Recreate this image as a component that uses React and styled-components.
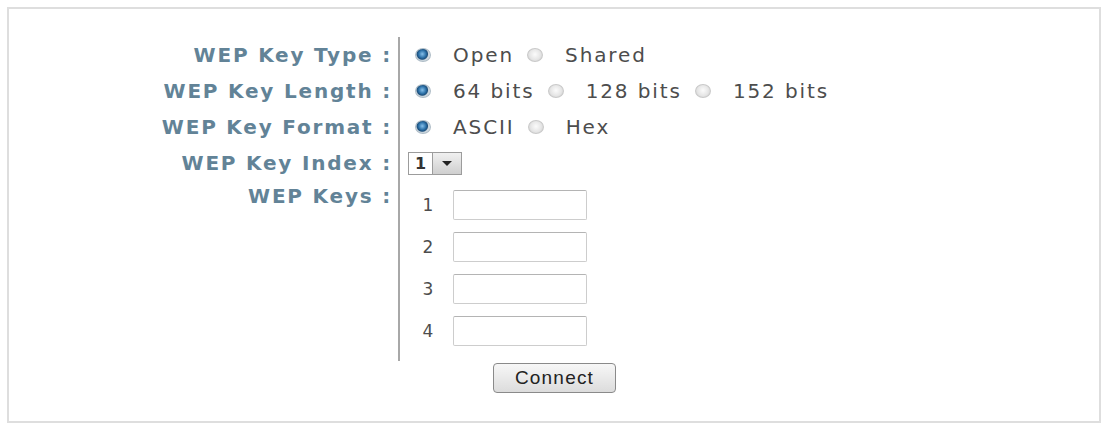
import React from "react";
import styled, { createGlobalStyle } from "styled-components";

const GlobalStyle = createGlobalStyle`
  body {
    margin: 0;
    background: #ffffff;
    font-family: "DejaVu Sans", Verdana, sans-serif;
  }
`;

const Page = styled.div`
  padding: 7px 2px 1px 7px;
`;

const Panel = styled.div`
  border: 2px solid #dedede;
  padding: 28px 0 28px;
  background: #fff;
`;

const Form = styled.div`
  display: grid;
  grid-template-columns: 389px 1fr;
`;

const Label = styled.div`
  height: 36px;
  display: flex;
  align-items: center;
  justify-content: flex-end;
  padding-right: 6px;
  font-size: 20px;
  font-weight: bold;
  letter-spacing: 1.8px;
  color: #628397;
  white-space: nowrap;
`;

const Value = styled.div`
  min-height: 36px;
  border-left: 2px solid #a8a8a8;
  display: flex;
  align-items: center;
  padding-left: ${(p) => (p.$inset ? "15px" : "8px")};
  font-size: 20px;
  letter-spacing: 1.9px;
  color: #4d4d4d;
`;

const Options = styled.div`
  display: flex;
  align-items: center;
  gap: 13px;
`;

const Option = styled.label`
  display: flex;
  align-items: center;
  white-space: nowrap;
`;

const Radio = styled.span`
  width: 16px;
  height: 14px;
  border-radius: 50%;
  margin-right: 22px;
  box-sizing: border-box;
  border: 1px solid ${(p) => (p.$checked ? "#aebcc6" : "#c9c9c9")};
  background: ${(p) =>
    p.$checked
      ? "radial-gradient(circle at 45% 42%, #86c0ea 0, #2f74ab 34%, #1c4f7c 50%, #c8d3db 60%, #eef1f3 100%)"
      : "radial-gradient(circle at 50% 45%, #fbfbfb 0, #e6e6e6 55%, #c9c9c9 100%)"};
`;

const Select = styled.div`
  display: flex;
  height: 23px;
  border: 1px solid #9c9c9c;
  box-sizing: border-box;
  background: #fff;
`;

const SelectValue = styled.span`
  width: 23px;
  display: flex;
  align-items: center;
  justify-content: center;
  font-size: 16px;
  font-weight: bold;
  letter-spacing: 0;
  color: #333;
`;

const SelectArrow = styled.span`
  width: 28px;
  border-left: 1px solid #9c9c9c;
  background: linear-gradient(#f0f0f0, #cfcfcf);
  display: flex;
  align-items: center;
  justify-content: center;

  &::after {
    content: "";
    border-left: 5px solid transparent;
    border-right: 5px solid transparent;
    border-top: 5px solid #222;
  }
`;

const KeyLabel = styled(Label)`
  align-self: start;
  margin-top: -3px;
`;

const KeyList = styled(Value)`
  flex-direction: column;
  align-items: flex-start;
  gap: 12px;
  padding-top: 9px;
  padding-bottom: 15px;
`;

const KeyRow = styled.div`
  display: flex;
  align-items: center;
`;

const KeyNum = styled.span`
  width: 40px;
  text-align: center;
  font-size: 17px;
  letter-spacing: 0;
  margin-right: 5px;
  color: #4d4d4d;
`;

const KeyInput = styled.input`
  width: 134px;
  height: 30px;
  box-sizing: border-box;
  border: 1px solid #cdcdcd;
  border-top-color: #b4b4b4;
  border-radius: 2px;
  background: #fff;
  outline: none;
`;

const Actions = styled.div`
  grid-column: 1 / -1;
  display: flex;
  justify-content: center;
  padding-top: 2px;
`;

const Button = styled.button`
  width: 123px;
  height: 30px;
  border: 1px solid #8a8a8a;
  border-radius: 4px;
  background: linear-gradient(#f7f7f7, #dcdcdc);
  font-family: "Liberation Sans", Arial, sans-serif;
  font-size: 19px;
  letter-spacing: 1.2px;
  color: #222;
  padding: 0 0 0 1px;
`;

const RadioGroup = ({ options, selected }) => (
  <Options>
    {options.map((opt) => (
      <Option key={opt}>
        <Radio $checked={opt === selected} />
        {opt}
      </Option>
    ))}
  </Options>
);

const App = () => {
  return (
    <Page>
      <GlobalStyle />
      <Panel>
        <Form>
          <Label>WEP Key Type :</Label>
          <Value $inset>
            <RadioGroup options={["Open", "Shared"]} selected="Open" />
          </Value>

          <Label>WEP Key Length :</Label>
          <Value $inset>
            <RadioGroup
              options={["64 bits", "128 bits", "152 bits"]}
              selected="64 bits"
            />
          </Value>

          <Label>WEP Key Format :</Label>
          <Value $inset>
            <RadioGroup options={["ASCII", "Hex"]} selected="ASCII" />
          </Value>

          <Label>WEP Key Index :</Label>
          <Value>
            <Select>
              <SelectValue>1</SelectValue>
              <SelectArrow />
            </Select>
          </Value>

          <KeyLabel>WEP Keys :</KeyLabel>
          <KeyList>
            {[1, 2, 3, 4].map((n) => (
              <KeyRow key={n}>
                <KeyNum>{n}</KeyNum>
                <KeyInput type="text" />
              </KeyRow>
            ))}
          </KeyList>

          <Actions>
            <Button>Connect</Button>
          </Actions>
        </Form>
      </Panel>
    </Page>
  );
};

export default App;
